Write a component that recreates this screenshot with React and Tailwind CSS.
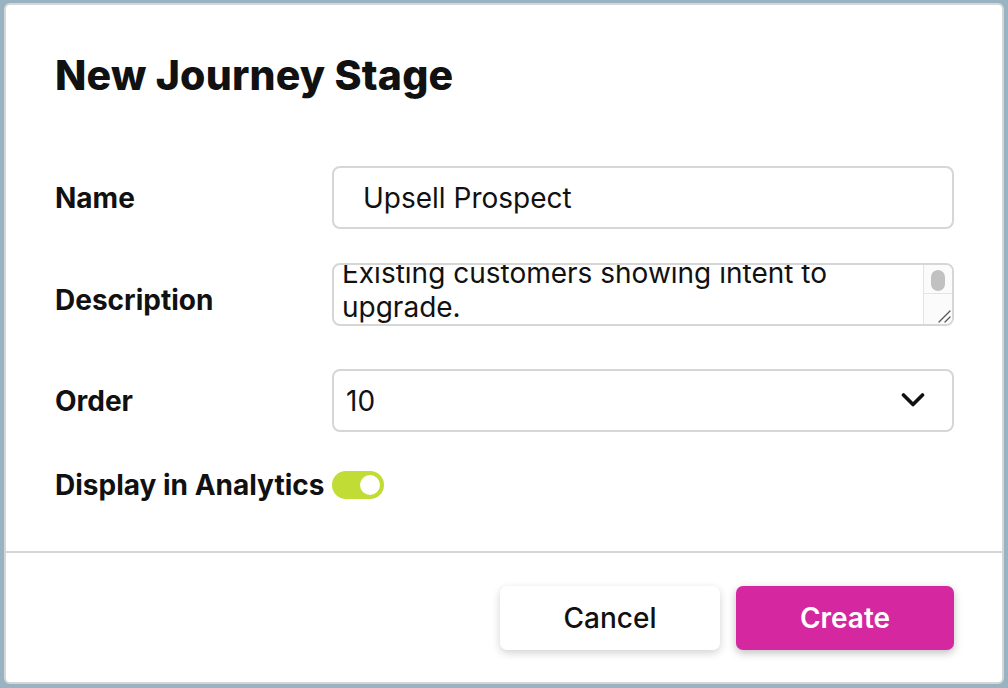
import React, { useEffect, useRef, useState } from 'react';

const Chevron = () => (
  <svg width="24" height="16" viewBox="0 0 24 16" fill="none" stroke="#111" strokeWidth="3.6" strokeLinecap="round" strokeLinejoin="round">
    <path d="M2.5 3l9.5 9.5L21.5 3" />
  </svg>
);

const Grip = () => (
  <svg width="14" height="14" viewBox="0 0 14 14" stroke="#555" strokeWidth="1.2" strokeLinecap="round">
    <path d="M2 13L13 2" />
    <path d="M8 13L13 8" />
  </svg>
);

const Toggle = ({ on, onChange }) => (
  <button
    type="button"
    onClick={() => onChange(!on)}
    className={`relative w-[52px] h-[28px] rounded-full ${on ? 'bg-[#c0dc35]' : 'bg-gray-300'}`}
  >
    <span
      className={`absolute top-[2px] w-[24px] h-[24px] rounded-full bg-white border-2 ${on ? 'left-[26px] border-[#c0dc35]' : 'left-[2px] border-gray-300'}`}
    />
  </button>
);

const App = () => {
  const [name, setName] = useState('Upsell Prospect');
  const [desc, setDesc] = useState('Existing customers showing intent to upgrade.');
  const [order, setOrder] = useState('10');
  const [analytics, setAnalytics] = useState(true);
  const descRef = useRef(null);

  // 描述框初始滚动位置
  useEffect(() => {
    if (descRef.current) descRef.current.scrollTop = 13;
  }, []);

  return (
    <div className="w-[1008px] h-[688px] bg-[#98b3c2] pt-[3px] px-[4px] pb-[4px] font-['Inter',sans-serif] text-[#111]">
      <div className="h-full bg-white border-2 border-[#d6d6d6] rounded-[6px] flex flex-col">
        {/* 标题 */}
        <h1 className="pl-[49px] pt-[45px] text-[41px] leading-[50px] font-extrabold tracking-[0.2px]">
          New Journey Stage
        </h1>

        {/* 表单 */}
        <div className="pl-[49px] pr-[48px] pt-[66px] grid grid-cols-[277px_1fr] items-center">
          <label className="text-[28px] font-bold">Name</label>
          <input
            value={name}
            onChange={(e) => setName(e.target.value)}
            className="h-[63px] border-2 border-[#d6d6d6] rounded-[8px] pl-[29px] text-[28px] outline-none"
          />

          <label className="mt-[34px] pt-[10px] text-[28px] font-bold">Description</label>
          <div className="mt-[34px] relative h-[63px] border-2 border-[#d6d6d6] rounded-[8px] overflow-hidden">
            <textarea
              ref={descRef}
              value={desc}
              onChange={(e) => setDesc(e.target.value)}
              className="block w-full h-full pl-[8px] pr-[36px] py-[4px] text-[28px] leading-[34px] outline-none resize-none overflow-y-scroll [scrollbar-width:none]"
            />
            {/* 滚动条 */}
            <div className="absolute top-0 right-0 bottom-0 w-[29px] bg-[#fbfbfb] border-l border-[#e4e4e4] flex flex-col">
              <div className="h-[29px] border-b border-[#e4e4e4] flex justify-center pt-[5px]">
                <div className="w-[14px] h-[21px] rounded-full bg-[#c1c1c1]" />
              </div>
              <div className="flex-1 flex items-end justify-end pr-[1px] pb-[1px]">
                <Grip />
              </div>
            </div>
          </div>

          <label className="mt-[43px] text-[28px] font-bold">Order</label>
          <div className="mt-[43px] relative">
            <select
              value={order}
              onChange={(e) => setOrder(e.target.value)}
              className="w-full h-[63px] appearance-none bg-white border-2 border-[#d6d6d6] rounded-[8px] pl-[12px] text-[28px] outline-none"
            >
              {[1, 2, 3, 4, 5, 6, 7, 8, 9, 10].map((n) => (
                <option key={n} value={n}>{n}</option>
              ))}
            </select>
            <span className="absolute right-[29px] top-[23px] pointer-events-none">
              <Chevron />
            </span>
          </div>
        </div>

        <div className="pl-[49px] pt-[36px] flex items-center">
          <span className="text-[28px] leading-[34px] font-bold mr-[8px]">Display in Analytics</span>
          <Toggle on={analytics} onChange={setAnalytics} />
        </div>

        <div className="mt-auto border-t-2 border-[#d6d6d6] flex justify-end gap-[16px] pr-[48px] pt-[33px] pb-[32px]">
          <button className="w-[220px] h-[64px] bg-white rounded-[7px] shadow-[0_3px_8px_rgba(0,0,0,0.18)] text-[28px] font-medium">
            Cancel
          </button>
          <button className="w-[218px] h-[64px] bg-[#d5279f] text-white rounded-[7px] shadow-[0_3px_8px_rgba(0,0,0,0.25)] text-[28px] font-semibold">
            Create
          </button>
        </div>
      </div>
    </div>
  );
};

export default App;
